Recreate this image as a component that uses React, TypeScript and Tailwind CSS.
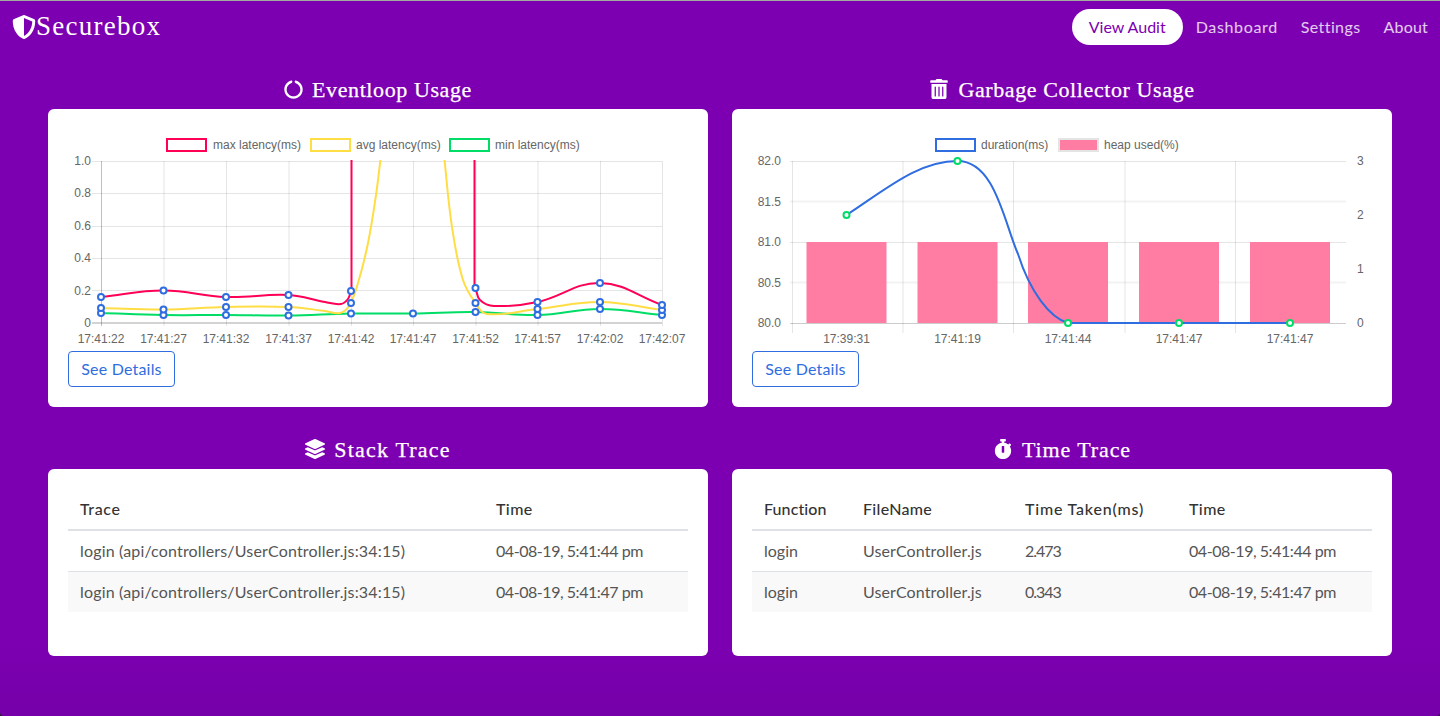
import { FaShieldAlt, FaCircleNotch, FaTrashAlt, FaLayerGroup, FaStopwatch } from "react-icons/fa";
import type { ReactNode } from "react";

type Pt = [number, number];

// same spline idea chart.js uses for line tension
function spline(pts: Pt[], t = 0.4) {
  let d = `M${pts[0][0]} ${pts[0][1]}`;
  const ctrl = (i: number) => {
    const prev = pts[Math.max(i - 1, 0)];
    const cur = pts[i];
    const next = pts[Math.min(i + 1, pts.length - 1)];
    const d01 = Math.hypot(cur[0] - prev[0], cur[1] - prev[1]);
    const d12 = Math.hypot(next[0] - cur[0], next[1] - cur[1]);
    const sum = d01 + d12 || 1;
    const fa = (t * d01) / sum;
    const fb = (t * d12) / sum;
    return {
      a: [cur[0] - fa * (next[0] - prev[0]), cur[1] - fa * (next[1] - prev[1])],
      b: [cur[0] + fb * (next[0] - prev[0]), cur[1] + fb * (next[1] - prev[1])],
    };
  };
  for (let i = 0; i < pts.length - 1; i++) {
    const c1 = ctrl(i).b;
    const c2 = ctrl(i + 1).a;
    d += ` C${c1[0]} ${c1[1]} ${c2[0]} ${c2[1]} ${pts[i + 1][0]} ${pts[i + 1][1]}`;
  }
  return d;
}

const xs = [101, 163.5, 226, 288.5, 351, 413, 475.5, 537.5, 600, 662];
const times = ["17:41:22", "17:41:27", "17:41:32", "17:41:37", "17:41:42", "17:41:47", "17:41:52", "17:41:57", "17:42:02", "17:42:07"];

const maxDots: Pt[] = [[101, 297], [163.5, 290.5], [226, 297], [288.5, 295], [351, 291], [475.5, 288], [537.5, 302], [600, 283], [662, 305]];
const avgDots: Pt[] = [[101, 308], [163.5, 309.5], [226, 307], [288.5, 307], [351, 303], [475.5, 303], [537.5, 309], [600, 302], [662, 310]];
const minDots: Pt[] = [[101, 313], [163.5, 315], [226, 315], [288.5, 315.5], [351, 313.5], [413, 313.5], [475.5, 312], [537.5, 315], [600, 309], [662, 315]];

const maxA = spline([[101, 297], [163.5, 290.5], [226, 297], [288.5, 295], [325, 302], [341, 304], [348, 299], [351, 291]]);
const maxB = spline([[475.5, 288], [480, 300], [494, 306], [537.5, 302], [600, 283], [662, 305]]);
const avgA = spline([[101, 308], [163.5, 309.5], [226, 307], [288.5, 307], [325, 311], [340, 313], [349, 306], [358, 283], [368, 243], [376, 195], [381, 155]]);
const avgB = spline([[444, 155], [452, 227], [463, 280], [475.5, 303], [487, 314], [537.5, 309], [600, 302], [662, 310]]);
const minLine = spline(minDots);

function ChartText({ x, y, anchor = "middle", children }: { x: number; y: number; anchor?: "start" | "middle" | "end"; children: ReactNode }) {
  return (
    <text x={x} y={y} textAnchor={anchor} fontSize="12" fill="#666666">
      {children}
    </text>
  );
}

function LegendBox({ x, color, fill = "#ffffff" }: { x: number; color: string; fill?: string }) {
  return <rect x={x + 1} y={139} width={39} height={12} fill={fill} stroke={color} strokeWidth="2" />;
}

function Dots({ pts, stroke }: { pts: Pt[]; stroke: string }) {
  return (
    <>
      {pts.map(([x, y], i) => (
        <circle key={i} cx={x} cy={y} r="3" fill="#ffffff" stroke={stroke} strokeWidth="2" />
      ))}
    </>
  );
}

function EventloopChart() {
  return (
    <svg width="620" height="222" viewBox="68 129 620 222" className="block font-['Liberation_Sans',sans-serif]">
      <defs>
        <clipPath id="plotA">
          <rect x="95" y="160" width="575" height="175" />
        </clipPath>
      </defs>
      <LegendBox x={166} color="#ff0055" />
      <ChartText x={213} y={149} anchor="start">max latency(ms)</ChartText>
      <LegendBox x={310} color="#ffdd44" />
      <ChartText x={356} y={149} anchor="start">avg latency(ms)</ChartText>
      <LegendBox x={449} color="#00dd66" />
      <ChartText x={495} y={149} anchor="start">min latency(ms)</ChartText>

      {[161.5, 193.5, 226.5, 258.5, 290.5].map((y) => (
        <line key={y} x1="92" x2="662" y1={y} y2={y} stroke="#000" strokeOpacity="0.1" />
      ))}
      <line x1="92" x2="662" y1="323" y2="323" stroke="#000" strokeOpacity="0.35" />
      {xs.map((x, i) => (
        <line key={x} x1={x + 0.5} x2={x + 0.5} y1="161" y2="326" stroke="#000" strokeOpacity={i === 0 ? 0.25 : 0.1} />
      ))}

      {["1.0", "0.8", "0.6", "0.4", "0.2", "0"].map((l, i) => (
        <ChartText key={l} x={91} y={165 + i * 32.4} anchor="end">{l}</ChartText>
      ))}
      {times.map((l, i) => (
        <ChartText key={l} x={xs[i]} y={343}>{l}</ChartText>
      ))}

      <g clipPath="url(#plotA)" fill="none" strokeWidth="2">
        <path d={minLine} stroke="#00dd66" />
        <path d={avgA} stroke="#ffdd44" />
        <path d={avgB} stroke="#ffdd44" />
        <path d={maxA} stroke="#ff0055" />
        <path d="M351.5 291 L351.5 155" stroke="#ff0055" />
        <path d="M474.5 155 L474.5 288" stroke="#ff0055" />
        <path d={maxB} stroke="#ff0055" />
      </g>
      <Dots pts={minDots} stroke="#2f6de0" />
      <Dots pts={avgDots} stroke="#2f6de0" />
      <Dots pts={maxDots} stroke="#2f6de0" />
    </svg>
  );
}

const gcXs = [846.5, 957.5, 1068, 1179, 1290];
const gcTimes = ["17:39:31", "17:41:19", "17:41:44", "17:41:47", "17:41:47"];

function GarbageChart() {
  return (
    <svg width="620" height="222" viewBox="752 129 620 222" className="block font-['Liberation_Sans',sans-serif]">
      <LegendBox x={935} color="#2f6de0" />
      <ChartText x={981} y={149} anchor="start">duration(ms)</ChartText>
      <rect x="1059" y="139" width="39" height="12" fill="#ff7ca3" stroke="#e4e4e4" strokeWidth="2" />
      <ChartText x={1104} y={149} anchor="start">heap used(%)</ChartText>

      {[161.5, 201.5, 242.5, 282.5].map((y, i) => (
        <line key={y} x1="790" x2="1346" y1={y} y2={y} stroke="#000" strokeOpacity={i % 2 ? 0.05 : 0.1} strokeWidth={i % 2 ? 2 : 1} />
      ))}
      {[792, 902.5, 1013, 1124.5, 1235].map((x) => (
        <line key={x} x1={x + 0.5} x2={x + 0.5} y1="161" y2="333" stroke="#000" strokeOpacity="0.1" />
      ))}

      {gcXs.map((x) => (
        <rect key={x} x={x - 40} y="242" width="80" height="81" fill="#ff7ca3" />
      ))}
      <line x1="790" x2="1346" y1="323.5" y2="323.5" stroke="#000" strokeOpacity="0.2" />

      {["82.0", "81.5", "81.0", "80.5", "80.0"].map((l, i) => (
        <ChartText key={l} x={781} y={165 + i * 40.5} anchor="end">{l}</ChartText>
      ))}
      {["3", "2", "1", "0"].map((l, i) => (
        <ChartText key={l} x={1357} y={165 + i * 54} anchor="start">{l}</ChartText>
      ))}
      {gcTimes.map((l, i) => (
        <ChartText key={i} x={gcXs[i]} y={343}>{l}</ChartText>
      ))}

      <path
        d="M846.5 215 C885 190 918 161 957.5 161 C995 161 1004 222 1018 254 C1030 292 1050 318 1068 323 L1290 323"
        fill="none"
        stroke="#2f6de0"
        strokeWidth="2"
      />
      <Dots pts={[[846.5, 215], [957.5, 161], [1068, 323], [1179, 323], [1290, 323]]} stroke="#00dd66" />
    </svg>
  );
}

function SeeDetails() {
  return (
    <button className="block h-9 w-[107px] rounded border border-[#2f6de0] text-center text-base tracking-[0.2px] text-[#2f6de0]">
      See Details
    </button>
  );
}

function Heading({ icon, title, spacing = "tracking-[0.6px]" }: { icon: ReactNode; title: string; spacing?: string }) {
  return (
    <h2 className={`flex h-10 items-center justify-center gap-[9px] font-['Liberation_Serif',serif] text-[22px] text-white [-webkit-text-stroke:0.25px_white] ${spacing}`}>
      {icon}
      {title}
    </h2>
  );
}

const traceCol = "tracking-[0.17px]";
const timeCol = "tracking-[-0.45px]";
const fileCol = "tracking-[0.1px]";
const numCol = "tracking-[-1px]";

function DataTable({ head, rows, widths, cols }: { head: [string, string][]; rows: string[][]; widths: string[]; cols: string[] }) {
  return (
    <table className="w-full table-fixed border-separate border-spacing-0 text-base">
      <colgroup>
        {widths.map((w, i) => (
          <col key={i} className={w} />
        ))}
      </colgroup>
      <thead>
        <tr>
          {head.map(([h, spacing]) => (
            <th key={h} className={`h-[42px] border-b-2 border-[#dee2e6] px-3 text-left font-medium text-[#333333] ${spacing}`}>{h}</th>
          ))}
        </tr>
      </thead>
      <tbody>
        {rows.map((r, i) => (
          <tr key={i} className={i % 2 ? "bg-[#f9f9f9]" : ""}>
            {r.map((c, j) => (
              <td key={j} className={`px-3 text-[#555555] ${cols[j]} ${i % 2 ? "h-[41px] border-t border-[#dee2e6]" : "h-10"}`}>{c}</td>
            ))}
          </tr>
        ))}
      </tbody>
    </table>
  );
}

export default function App() {
  return (
    <div className="bg-[#2a1a2e]">
      <div className="h-[716px] overflow-hidden rounded-b-[4px] border-t border-[#a3aa9f] bg-gradient-to-b from-[#7c00b1] from-90% to-[#7600a9] font-['Lato',sans-serif]">
        <nav className="flex h-[51px] items-center justify-between pl-3">
          <a className="flex items-center font-['Liberation_Serif',serif] text-[27px] tracking-[1.25px] text-white">
            <FaShieldAlt size={24} />
            Securebox
          </a>
          <ul className="flex items-center text-base text-white/80">
            <li className="mr-px flex h-9 items-center rounded-full bg-white px-[17px] text-[#7c00b1]">View Audit</li>
            <li className="pl-3 pr-[11px] tracking-[0.65px]">Dashboard</li>
            <li className="pl-3 pr-[11px] tracking-[0.4px]">Settings</li>
            <li className="px-3 tracking-[0.2px]">About</li>
          </ul>
        </nav>

        <main className="grid grid-cols-2 gap-x-6 px-12 pt-[17px]">
          <section>
            <Heading icon={<FaCircleNotch size={19} />} title="Eventloop Usage" />
            <div className="mb-[22px] rounded-md bg-white p-5">
              <EventloopChart />
              <SeeDetails />
            </div>
          </section>
          <section>
            <Heading icon={<FaTrashAlt size={20} />} title="Garbage Collector Usage" />
            <div className="mb-[22px] rounded-md bg-white p-5">
              <GarbageChart />
              <SeeDetails />
            </div>
          </section>
          <section>
            <Heading icon={<FaLayerGroup size={20} />} title="Stack Trace" spacing="tracking-[1.2px]" />
            <div className="rounded-md bg-white px-5 pb-[44px] pt-5">
              <DataTable
                head={[["Trace", "tracking-[0.6px]"], ["Time", "tracking-[0.4px]"]]}
                widths={["w-[416px]", "w-[204px]"]}
                cols={[traceCol, timeCol]}
                rows={[
                  ["login (api/controllers/UserController.js:34:15)", "04-08-19, 5:41:44 pm"],
                  ["login (api/controllers/UserController.js:34:15)", "04-08-19, 5:41:47 pm"],
                ]}
              />
            </div>
          </section>
          <section>
            <Heading icon={<FaStopwatch size={20} />} title="Time Trace" spacing="tracking-[0.9px]" />
            <div className="rounded-md bg-white px-5 pb-[44px] pt-5">
              <DataTable
                head={[["Function", "tracking-[0.1px]"], ["FileName", "tracking-[0.3px]"], ["Time Taken(ms)", "tracking-[0.8px]"], ["Time", "tracking-[0.4px]"]]}
                widths={["w-[99px]", "w-[162px]", "w-[164px]", "w-[195px]"]}
                cols={["", fileCol, numCol, timeCol]}
                rows={[
                  ["login", "UserController.js", "2.473", "04-08-19, 5:41:44 pm"],
                  ["login", "UserController.js", "0.343", "04-08-19, 5:41:47 pm"],
                ]}
              />
            </div>
          </section>
        </main>
      </div>
    </div>
  );
}
